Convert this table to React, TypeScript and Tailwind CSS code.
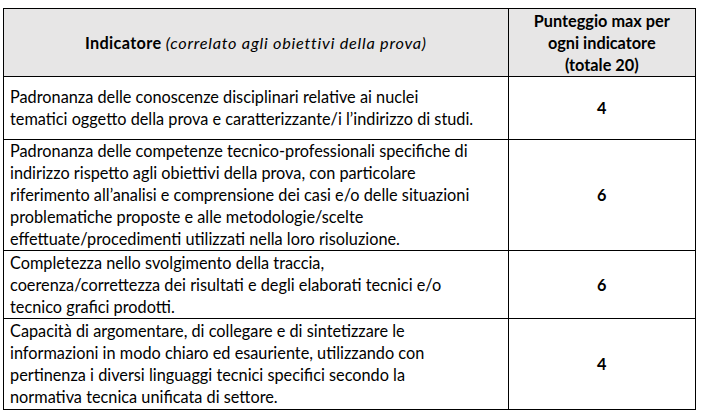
import React from "react";

const rows: { lines: string[]; score: string; h: string }[] = [
  {
    lines: [
      "Padronanza delle conoscenze disciplinari relative ai nuclei",
      "tematici oggetto della prova e caratterizzante/i l’indirizzo di studi.",
    ],
    score: "4",
    h: "h-[63px]",
  },
  {
    lines: [
      "Padronanza delle competenze tecnico-professionali specifiche di",
      "indirizzo rispetto agli obiettivi della prova, con particolare",
      "riferimento all’analisi e comprensione dei casi e/o delle situazioni",
      "problematiche proposte e alle metodologie/scelte",
      "effettuate/procedimenti utilizzati nella loro risoluzione.",
    ],
    score: "6",
    h: "h-[110px]",
  },
  {
    lines: [
      "Completezza nello svolgimento della traccia,",
      "coerenza/correttezza dei risultati e degli elaborati tecnici e/o",
      "tecnico grafici prodotti.",
    ],
    score: "6",
    h: "h-[68px]",
  },
  {
    lines: [
      "Capacità di argomentare, di collegare e di sintetizzare le",
      "informazioni in modo chiaro ed esauriente, utilizzando con",
      "pertinenza i diversi linguaggi tecnici specifici secondo la",
      "normativa tecnica unificata di settore.",
    ],
    score: "4",
    h: "h-[91px]",
  },
];

export default function App() {
  return (
    <div className="w-[701px] h-[413px] bg-white overflow-hidden pt-[8px] pl-[3px]">
      <table
        className="border-collapse w-[693px] text-black text-[16.3px] leading-[22px]"
        style={{ fontFamily: "Lato, 'Open Sans', sans-serif" }}
      >
        <colgroup>
          <col className="w-[505px]" />
          <col className="w-[188px]" />
        </colgroup>
        <tbody>
          <tr className="h-[68px] bg-[#e7e6e6]">
            <td className="border border-black text-center align-middle whitespace-nowrap px-[6px] p-0">
              <span className="font-bold tracking-[0.35px]">Indicatore</span>{" "}
              <span className="italic tracking-[0.75px]">(correlato agli obiettivi della prova)</span>
            </td>
            <td className="border border-black text-center align-middle font-bold whitespace-nowrap p-0">
              Punteggio max per
              <br />
              ogni indicatore
              <br />
              (totale 20)
            </td>
          </tr>
          {rows.map((r, i) => (
            <tr key={i} className={r.h}>
              <td className="border border-black align-middle whitespace-nowrap pl-[6px] pr-[2px] py-0">
                {r.lines.map((l, j) => (
                  <div key={j}>{l}</div>
                ))}
              </td>
              <td className="border border-black text-center align-middle font-bold p-0">
                {r.score}
              </td>
            </tr>
          ))}
        </tbody>
      </table>
    </div>
  );
}
